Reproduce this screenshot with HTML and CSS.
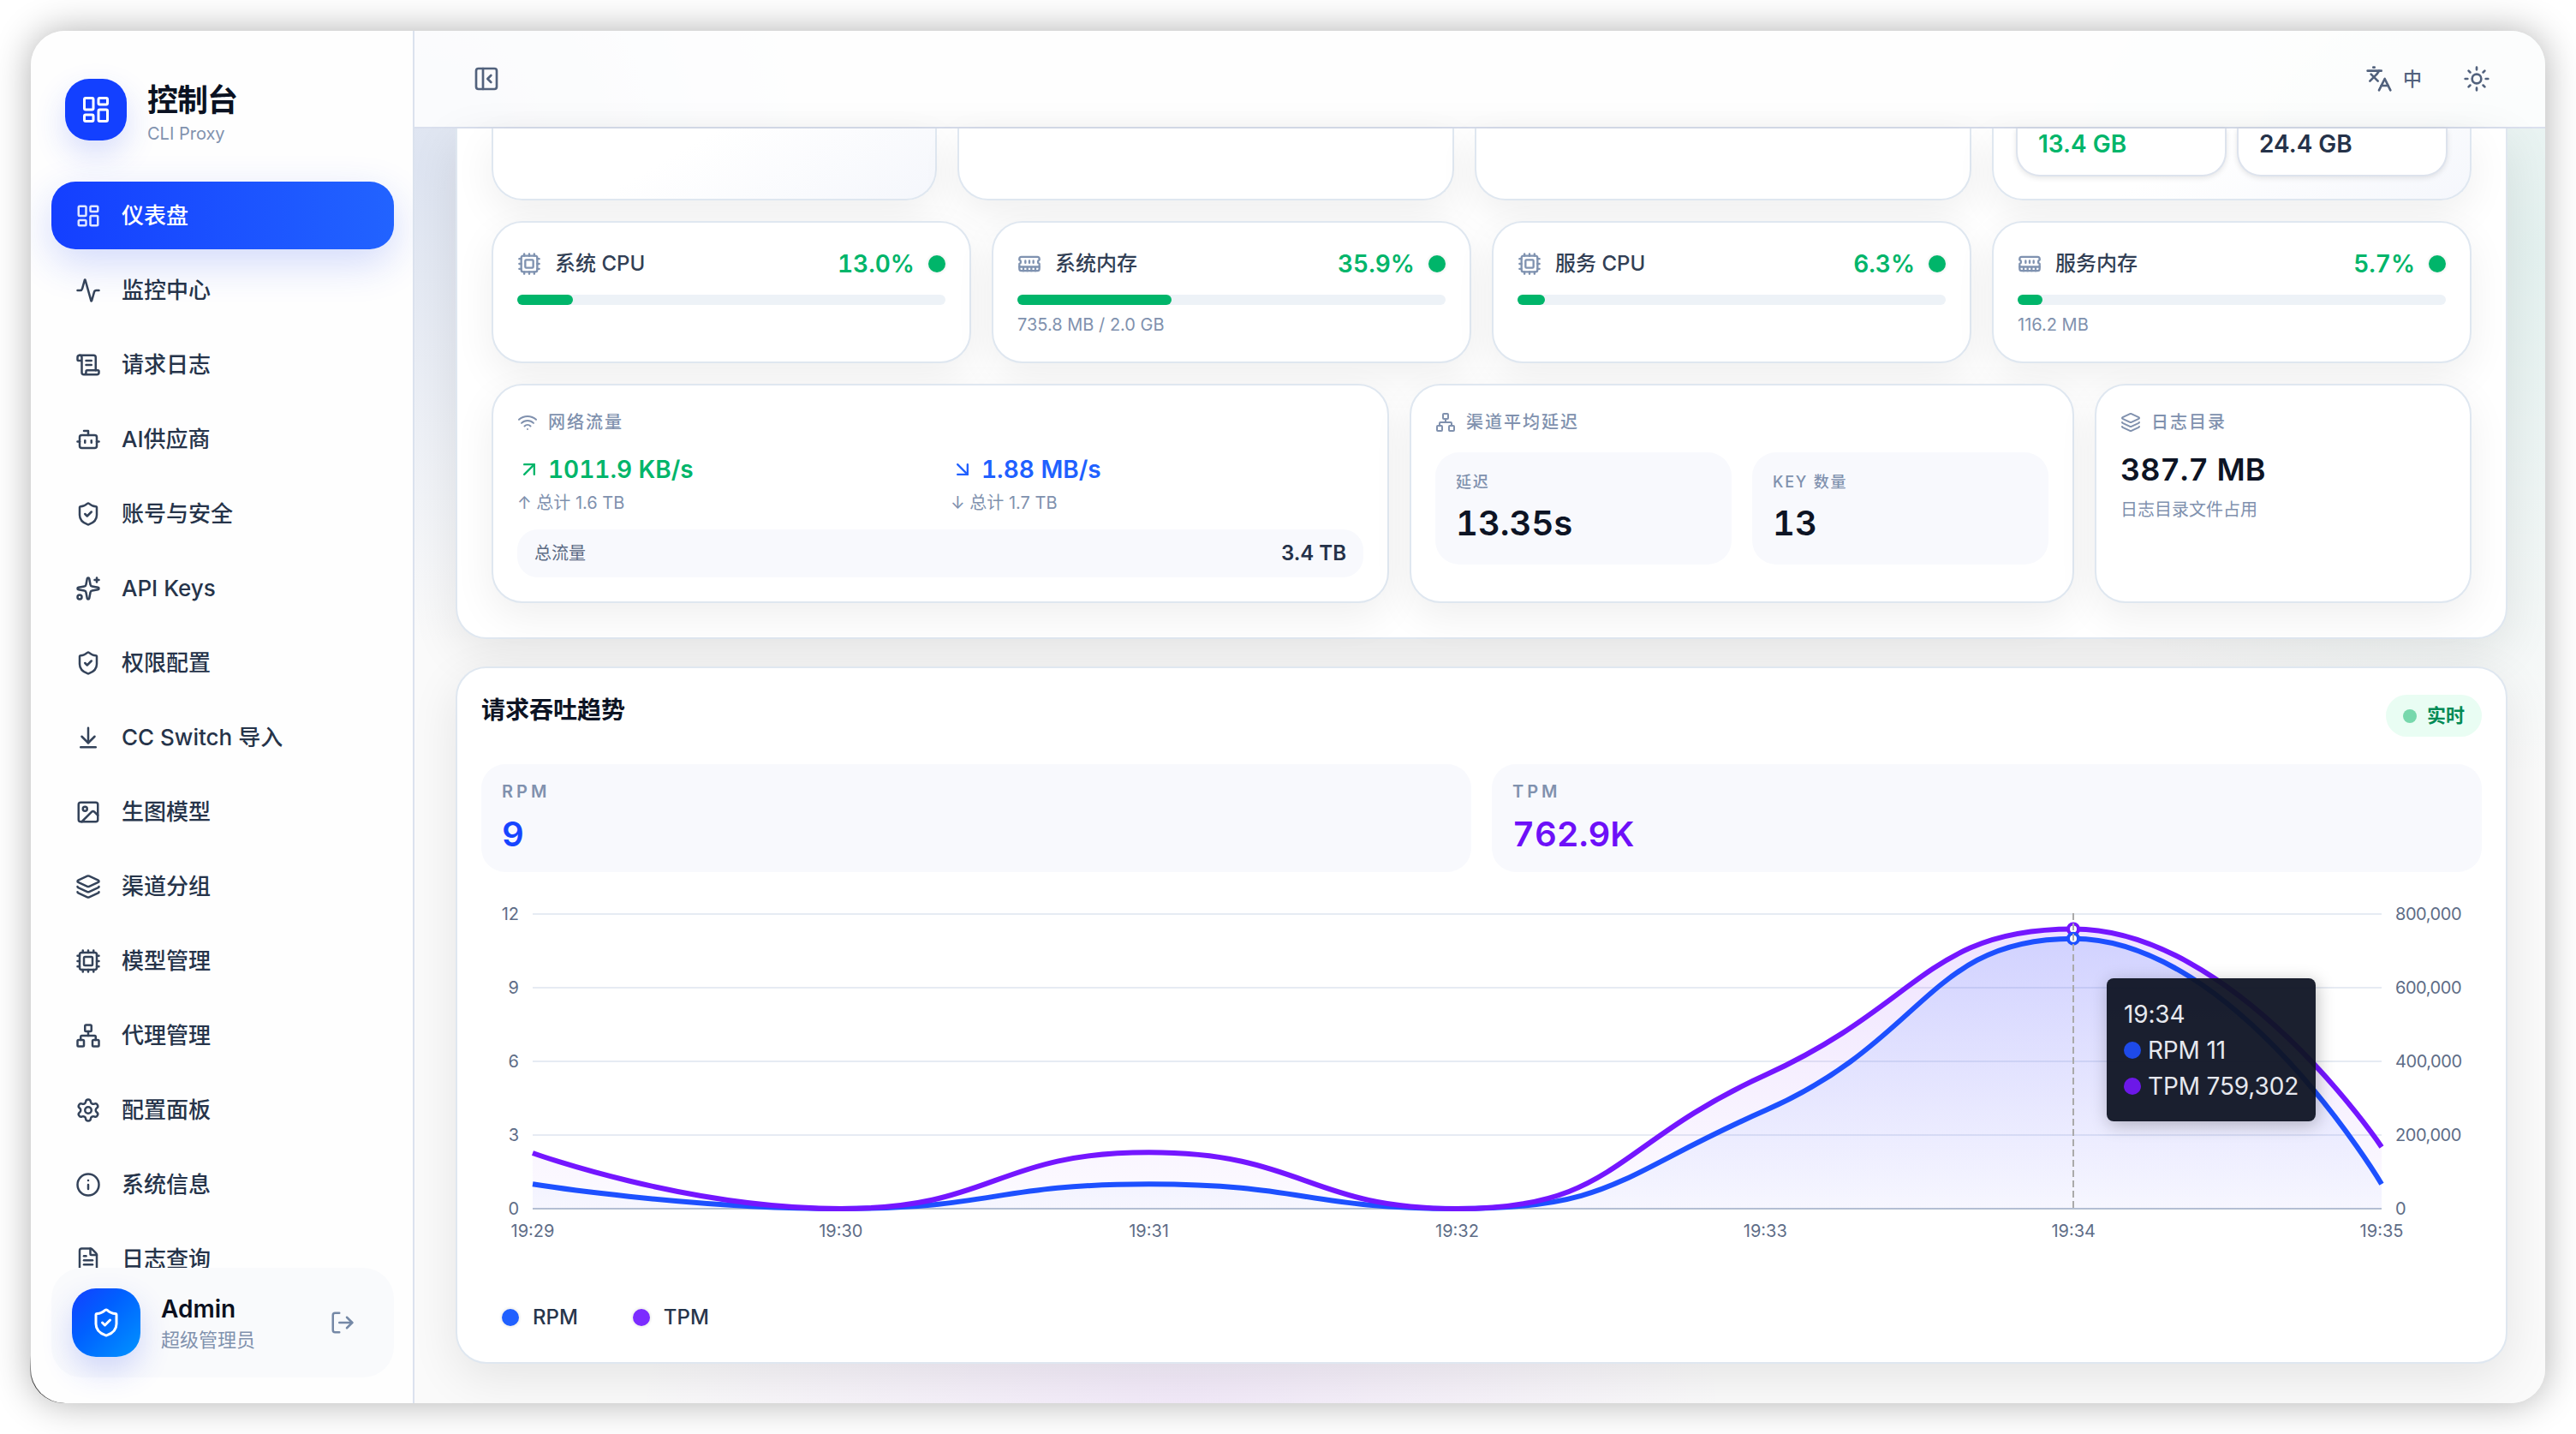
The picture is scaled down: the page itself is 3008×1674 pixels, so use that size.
FILE: index.html
```html
<!DOCTYPE html>
<html lang="zh-CN">
<head>
<meta charset="utf-8">
<title>控制台 · CLI Proxy</title>
<link rel="stylesheet" href="styles.css">
</head>
<body>
<svg class="sprite" aria-hidden="true">
  <symbol id="i-dashboard" viewBox="0 0 24 24"><rect x="3" y="3" width="7" height="9" rx="1"/><rect x="14" y="3" width="7" height="5" rx="1"/><rect x="14" y="12" width="7" height="9" rx="1"/><rect x="3" y="16" width="7" height="5" rx="1"/></symbol>
  <symbol id="i-activity" viewBox="0 0 24 24"><path d="M22 12h-2.48a2 2 0 0 0-1.93 1.46l-2.35 8.36a.25.25 0 0 1-.48 0L9.24 2.18a.25.25 0 0 0-.48 0l-2.35 8.36A2 2 0 0 1 4.49 12H2"/></symbol>
  <symbol id="i-scroll" viewBox="0 0 24 24"><path d="M15 12h-5"/><path d="M15 8h-5"/><path d="M19 17V5a2 2 0 0 0-2-2H4"/><path d="M8 21h12a2 2 0 0 0 2-2v-1a1 1 0 0 0-1-1H11a1 1 0 0 0-1 1v1a2 2 0 1 1-4 0V5a2 2 0 1 0-4 0v2a1 1 0 0 0 1 1h3"/></symbol>
  <symbol id="i-bot" viewBox="0 0 24 24"><path d="M12 8V4H8"/><rect x="4" y="8" width="16" height="12" rx="2"/><path d="M2 14h2"/><path d="M20 14h2"/><path d="M15 13v2"/><path d="M9 13v2"/></symbol>
  <symbol id="i-shield" viewBox="0 0 24 24"><path d="M20 13c0 5-3.5 7.5-7.66 8.95a1 1 0 0 1-.67-.01C7.5 20.5 4 18 4 13V6a1 1 0 0 1 1-1c2 0 4.5-1.2 6.24-2.72a1.17 1.17 0 0 1 1.52 0C14.51 3.81 17 5 19 5a1 1 0 0 1 1 1z"/><path d="m9 12 2 2 4-4"/></symbol>
  <symbol id="i-sparkles" viewBox="0 0 24 24"><path d="M11.017 2.814a1 1 0 0 1 1.966 0l1.051 5.558a2 2 0 0 0 1.594 1.594l5.558 1.051a1 1 0 0 1 0 1.966l-5.558 1.051a2 2 0 0 0-1.594 1.594l-1.051 5.558a1 1 0 0 1-1.966 0l-1.051-5.558a2 2 0 0 0-1.594-1.594l-5.558-1.051a1 1 0 0 1 0-1.966l5.558-1.051a2 2 0 0 0 1.594-1.594z"/><path d="M20 2v4"/><path d="M22 4h-4"/><circle cx="4" cy="20" r="2"/></symbol>
  <symbol id="i-import" viewBox="0 0 24 24"><path d="M12 17V3"/><path d="m6 11 6 6 6-6"/><path d="M19 21H5"/></symbol>
  <symbol id="i-image" viewBox="0 0 24 24"><rect x="3" y="3" width="18" height="18" rx="2"/><circle cx="9" cy="9" r="2"/><path d="m21 15-3.086-3.086a2 2 0 0 0-2.828 0L6 21"/></symbol>
  <symbol id="i-layers" viewBox="0 0 24 24"><path d="M12.83 2.18a2 2 0 0 0-1.66 0L2.6 6.08a1 1 0 0 0 0 1.83l8.58 3.91a2 2 0 0 0 1.66 0l8.58-3.9a1 1 0 0 0 0-1.83z"/><path d="M2 12a1 1 0 0 0 .58.91l8.6 3.91a2 2 0 0 0 1.65 0l8.58-3.9A1 1 0 0 0 22 12"/><path d="M2 17a1 1 0 0 0 .58.91l8.6 3.91a2 2 0 0 0 1.65 0l8.58-3.9A1 1 0 0 0 22 17"/></symbol>
  <symbol id="i-cpu" viewBox="0 0 24 24"><path d="M12 20v2M12 2v2M17 20v2M17 2v2M2 12h2M2 17h2M2 7h2M20 12h2M20 17h2M20 7h2M7 20v2M7 2v2"/><rect x="4" y="4" width="16" height="16" rx="2"/><rect x="8" y="8" width="8" height="8" rx="1"/></symbol>
  <symbol id="i-network" viewBox="0 0 24 24"><rect x="16" y="16" width="6" height="6" rx="1"/><rect x="2" y="16" width="6" height="6" rx="1"/><rect x="9" y="2" width="6" height="6" rx="1"/><path d="M5 16v-3a1 1 0 0 1 1-1h12a1 1 0 0 1 1 1v3"/><path d="M12 12V8"/></symbol>
  <symbol id="i-settings" viewBox="0 0 24 24"><path d="M9.671 4.136a2.34 2.34 0 0 1 4.659 0 2.34 2.34 0 0 0 3.319 1.915 2.34 2.34 0 0 1 2.33 4.033 2.34 2.34 0 0 0 0 3.831 2.34 2.34 0 0 1-2.33 4.033 2.34 2.34 0 0 0-3.319 1.915 2.34 2.34 0 0 1-4.659 0 2.34 2.34 0 0 0-3.32-1.915 2.34 2.34 0 0 1-2.33-4.033 2.34 2.34 0 0 0 0-3.831A2.34 2.34 0 0 1 6.35 6.051a2.34 2.34 0 0 0 3.319-1.915"/><circle cx="12" cy="12" r="3"/></symbol>
  <symbol id="i-info" viewBox="0 0 24 24"><circle cx="12" cy="12" r="10"/><path d="M12 16v-4"/><path d="M12 8h.01"/></symbol>
  <symbol id="i-file" viewBox="0 0 24 24"><path d="M6 22a2 2 0 0 1-2-2V4a2 2 0 0 1 2-2h8a2.4 2.4 0 0 1 1.704.706l3.588 3.588A2.4 2.4 0 0 1 20 8v12a2 2 0 0 1-2 2z"/><path d="M14 2v5a1 1 0 0 0 1 1h5"/><path d="M10 9H8"/><path d="M16 13H8"/><path d="M16 17H8"/></symbol>
  <symbol id="i-logout" viewBox="0 0 24 24"><path d="m16 17 5-5-5-5"/><path d="M21 12H9"/><path d="M9 21H5a2 2 0 0 1-2-2V5a2 2 0 0 1 2-2h4"/></symbol>
  <symbol id="i-panel" viewBox="0 0 24 24"><rect x="3" y="3" width="18" height="18" rx="2"/><path d="M9 3v18"/><path d="m16 15-3-3 3-3"/></symbol>
  <symbol id="i-lang" viewBox="0 0 24 24"><path d="m5 8 6 6"/><path d="m4 14 6-6 2-3"/><path d="M2 5h12"/><path d="M7 2h1"/><path d="m22 22-5-10-5 10"/><path d="M14 18h6"/></symbol>
  <symbol id="i-sun" viewBox="0 0 24 24"><circle cx="12" cy="12" r="4"/><path d="M12 2v2M12 20v2M4.93 4.93l1.41 1.41M17.66 17.66l1.41 1.41M2 12h2M20 12h2M6.34 17.66l-1.41 1.41M19.07 4.93l-1.41 1.41"/></symbol>
  <symbol id="i-memory" viewBox="0 0 24 24"><path d="M6 19v-3M10 19v-3M14 19v-3M18 19v-3M8 11V9M16 11V9M12 11V9M2 15h20"/><path d="M2 7a2 2 0 0 1 2-2h16a2 2 0 0 1 2 2v1.1a2 2 0 0 0 0 3.837V17a2 2 0 0 1-2 2H4a2 2 0 0 1-2-2v-5.1a2 2 0 0 0 0-3.837Z"/></symbol>
  <symbol id="i-wifi" viewBox="0 0 24 24"><path d="M12 20h.01"/><path d="M2 8.82a15 15 0 0 1 20 0"/><path d="M5 12.859a10 10 0 0 1 14 0"/><path d="M8.5 16.429a5 5 0 0 1 7 0"/></symbol>
  <symbol id="i-upright" viewBox="0 0 24 24"><path d="M7 7h10v10"/><path d="M7 17 17 7"/></symbol>
  <symbol id="i-downright" viewBox="0 0 24 24"><path d="m7 7 10 10"/><path d="M17 7v10H7"/></symbol>
</svg>

<div class="window">
  <aside class="sidebar">
    <div class="brand">
      <div class="brand-mark"><svg class="icon icon-36"><use href="#i-dashboard"/></svg></div>
      <div class="brand-text"><div class="brand-title">控制台</div><div class="brand-sub">CLI Proxy</div></div>
    </div>
    <nav class="nav">
      <a class="nav-item active"><svg class="icon icon-30"><use href="#i-dashboard"/></svg><span>仪表盘</span></a>
      <a class="nav-item"><svg class="icon icon-30"><use href="#i-activity"/></svg><span>监控中心</span></a>
      <a class="nav-item"><svg class="icon icon-30"><use href="#i-scroll"/></svg><span>请求日志</span></a>
      <a class="nav-item"><svg class="icon icon-30"><use href="#i-bot"/></svg><span>AI供应商</span></a>
      <a class="nav-item"><svg class="icon icon-30"><use href="#i-shield"/></svg><span>账号与安全</span></a>
      <a class="nav-item"><svg class="icon icon-30"><use href="#i-sparkles"/></svg><span>API Keys</span></a>
      <a class="nav-item"><svg class="icon icon-30"><use href="#i-shield"/></svg><span>权限配置</span></a>
      <a class="nav-item"><svg class="icon icon-30"><use href="#i-import"/></svg><span>CC Switch 导入</span></a>
      <a class="nav-item"><svg class="icon icon-30"><use href="#i-image"/></svg><span>生图模型</span></a>
      <a class="nav-item"><svg class="icon icon-30"><use href="#i-layers"/></svg><span>渠道分组</span></a>
      <a class="nav-item"><svg class="icon icon-30"><use href="#i-cpu"/></svg><span>模型管理</span></a>
      <a class="nav-item"><svg class="icon icon-30"><use href="#i-network"/></svg><span>代理管理</span></a>
      <a class="nav-item"><svg class="icon icon-30"><use href="#i-settings"/></svg><span>配置面板</span></a>
      <a class="nav-item"><svg class="icon icon-30"><use href="#i-info"/></svg><span>系统信息</span></a>
      <a class="nav-item"><svg class="icon icon-30"><use href="#i-file"/></svg><span>日志查询</span></a>
    </nav>
    <div class="user">
      <div class="avatar"><svg class="icon icon-36"><use href="#i-shield"/></svg></div>
      <div class="user-text"><div class="user-name">Admin</div><div class="user-role">超级管理员</div></div>
      <div class="user-logout"><svg class="icon icon-30"><use href="#i-logout"/></svg></div>
    </div>
  </aside>

  <main class="main">
    <header class="topbar">
      <div class="tool"><svg class="icon icon-32"><use href="#i-panel"/></svg></div>
      <div class="topbar-right">
        <div class="lang"><svg class="icon icon-32"><use href="#i-lang"/></svg><span>中</span></div>
        <div class="tool"><svg class="icon icon-32"><use href="#i-sun"/></svg></div>
      </div>
    </header>

    <div class="content">
      <section class="panel overview">
        <div class="row row-summary">
          <div class="card cut tinted"></div>
          <div class="card cut"></div>
          <div class="card cut"></div>
          <div class="card cut tinted pair">
            <div class="mini green">13.4 GB</div>
            <div class="mini">24.4 GB</div>
          </div>
        </div>

        <div class="row row-meters">
          <div class="card meter">
            <div class="meter-head"><svg class="icon icon-28"><use href="#i-cpu"/></svg><span class="meter-name">系统 CPU</span><span class="meter-value">13.0%</span><i class="dot"></i></div>
            <div class="bar"><div class="bar-fill" style="width:13%"></div></div>
          </div>
          <div class="card meter">
            <div class="meter-head"><svg class="icon icon-28"><use href="#i-memory"/></svg><span class="meter-name">系统内存</span><span class="meter-value">35.9%</span><i class="dot"></i></div>
            <div class="bar"><div class="bar-fill" style="width:35.9%"></div></div>
            <div class="meter-sub">735.8 MB / 2.0 GB</div>
          </div>
          <div class="card meter">
            <div class="meter-head"><svg class="icon icon-28"><use href="#i-cpu"/></svg><span class="meter-name">服务 CPU</span><span class="meter-value">6.3%</span><i class="dot"></i></div>
            <div class="bar"><div class="bar-fill" style="width:6.3%"></div></div>
          </div>
          <div class="card meter">
            <div class="meter-head"><svg class="icon icon-28"><use href="#i-memory"/></svg><span class="meter-name">服务内存</span><span class="meter-value">5.7%</span><i class="dot"></i></div>
            <div class="bar"><div class="bar-fill" style="width:5.7%"></div></div>
            <div class="meter-sub">116.2 MB</div>
          </div>
        </div>

        <div class="row row-detail">
          <div class="card detail">
            <div class="detail-head"><svg class="icon icon-24"><use href="#i-wifi"/></svg><span>网络流量</span></div>
            <div class="traffic">
              <div>
                <div class="speed up"><svg class="icon icon-28"><use href="#i-upright"/></svg><span>1011.9 KB/s</span></div>
                <div class="speed-sub">↑ 总计 1.6 TB</div>
              </div>
              <div>
                <div class="speed down"><svg class="icon icon-28"><use href="#i-downright"/></svg><span>1.88 MB/s</span></div>
                <div class="speed-sub">↓ 总计 1.7 TB</div>
              </div>
            </div>
            <div class="total"><span>总流量</span><b>3.4 TB</b></div>
          </div>
          <div class="card detail">
            <div class="detail-head"><svg class="icon icon-24"><use href="#i-network"/></svg><span>渠道平均延迟</span></div>
            <div class="latency">
              <div class="tile"><div class="tile-label">延迟</div><div class="tile-value">13.35s</div></div>
              <div class="tile"><div class="tile-label">KEY 数量</div><div class="tile-value">13</div></div>
            </div>
          </div>
          <div class="card detail">
            <div class="detail-head"><svg class="icon icon-24"><use href="#i-layers"/></svg><span>日志目录</span></div>
            <div class="disk">387.7 MB</div>
            <div class="disk-sub">日志目录文件占用</div>
          </div>
        </div>
      </section>

      <section class="panel trend">
        <div class="trend-head"><h2>请求吞吐趋势</h2><div class="live"><i></i><span>实时</span></div></div>
        <div class="stats">
          <div class="stat"><div class="stat-label">RPM</div><div class="stat-value rpm">9</div></div>
          <div class="stat"><div class="stat-label">TPM</div><div class="stat-value tpm">762.9K</div></div>
        </div>
        <div class="chart">
          <svg class="plot" viewBox="562 1042 2336 454">
            <defs>
              <linearGradient id="g-rpm" gradientUnits="userSpaceOnUse" x1="0" y1="1095" x2="0" y2="1411"><stop offset="0" stop-color="#3473ff" stop-opacity=".16"/><stop offset="1" stop-color="#3473ff" stop-opacity=".03"/></linearGradient>
              <linearGradient id="g-tpm" gradientUnits="userSpaceOnUse" x1="0" y1="1084" x2="0" y2="1411"><stop offset="0" stop-color="#7a1aff" stop-opacity=".12"/><stop offset="1" stop-color="#7a1aff" stop-opacity=".02"/></linearGradient>
            </defs>
            <path class="grid" d="M622 1067H2781M622 1153H2781M622 1239H2781M622 1325H2781"/>
            <path class="axis" d="M622 1411H2781"/>
            <path fill="url(#g-tpm)" d="M622 1346C622 1346 801.9 1411 981.8 1411C1161.7 1411 1161.7 1345.3 1341.6 1345.3C1521.5 1345.3 1527.9 1411 1701.5 1411C1887.7 1411 1882.7 1336 2061.3 1255C2242.6 1172.8 2250.4 1084.5 2421.2 1084.5C2610.2 1084.5 2781 1339 2781 1339V1411H622Z"/>
            <path fill="url(#g-rpm)" d="M622 1382.3C622 1382.3 801.9 1411 981.8 1411C1161.7 1411 1161.7 1382.3 1341.6 1382.3C1521.5 1382.3 1525.7 1411 1701.5 1411C1885.4 1411 1889.2 1371.7 2061.3 1296.3C2249 1214.1 2251.2 1095.7 2421.2 1095.7C2611 1095.7 2781 1382.3 2781 1382.3V1411H622Z"/>
            <path class="line line-rpm" d="M622 1382.3C622 1382.3 801.9 1411 981.8 1411C1161.7 1411 1161.7 1382.3 1341.6 1382.3C1521.5 1382.3 1525.7 1411 1701.5 1411C1885.4 1411 1889.2 1371.7 2061.3 1296.3C2249 1214.1 2251.2 1095.7 2421.2 1095.7C2611 1095.7 2781 1382.3 2781 1382.3"/>
            <path class="line line-tpm" d="M622 1346C622 1346 801.9 1411 981.8 1411C1161.7 1411 1161.7 1345.3 1341.6 1345.3C1521.5 1345.3 1527.9 1411 1701.5 1411C1887.7 1411 1882.7 1336 2061.3 1255C2242.6 1172.8 2250.4 1084.5 2421.2 1084.5C2610.2 1084.5 2781 1339 2781 1339"/>
            <circle class="mark line-tpm" cx="2421" cy="1084.5" r="6"/>
            <circle class="mark line-rpm" cx="2421" cy="1095.7" r="6"/>
            <path class="pointer" d="M2421 1066V1411"/>
            <g class="tick" text-anchor="end"><text x="606" y="1073.5">12</text><text x="606" y="1159.5">9</text><text x="606" y="1245.5">6</text><text x="606" y="1331.5">3</text><text x="606" y="1417.5">0</text></g>
            <g class="tick tick-right"><text x="2797" y="1073.5">800,000</text><text x="2797" y="1159.5">600,000</text><text x="2797" y="1245.5">400,000</text><text x="2797" y="1331.5">200,000</text><text x="2797" y="1417.5">0</text></g>
            <g class="tick" text-anchor="middle"><text x="622" y="1443.5">19:29</text><text x="981.8" y="1443.5">19:30</text><text x="1341.6" y="1443.5">19:31</text><text x="1701.5" y="1443.5">19:32</text><text x="2061.3" y="1443.5">19:33</text><text x="2421.2" y="1443.5">19:34</text><text x="2781" y="1443.5">19:35</text></g>
          </svg>
          <div class="tooltip">
            <div>19:34</div>
            <div><i class="bg-rpm"></i>RPM 11</div>
            <div><i class="bg-tpm"></i>TPM 759,302</div>
          </div>
        </div>
        <div class="legend"><span><i class="key-rpm"></i>RPM</span><span><i class="key-tpm"></i>TPM</span></div>
      </section>
    </div>
  </main>
</div>
</body>
</html>
```
FILE: styles.css
```css
* { box-sizing: border-box; }

body {
  margin: 0;
  width: 3008px;
  height: 1674px;
  padding: 36px;
  overflow: hidden;
  background: #fff;
  color: #27354b;
  font-family: Inter, "Noto Sans CJK SC", sans-serif;
  font-size: 24px;
  line-height: 1.5;
}

.sprite { display: none; }

.icon {
  flex: none;
  fill: none;
  stroke: currentColor;
  stroke-width: 2;
  stroke-linecap: round;
  stroke-linejoin: round;
}
.icon-24 { width: 24px; height: 24px; }
.icon-28 { width: 28px; height: 28px; }
.icon-30 { width: 30px; height: 30px; }
.icon-32 { width: 32px; height: 32px; }
.icon-36 { width: 36px; height: 36px; }

.window {
  position: relative;
  display: flex;
  width: 2936px;
  height: 1602px;
  border-radius: 40px;
  box-shadow: 0 0 44px rgba(0, 0, 0, .31);
}
/* dark sliver hugging the lower-left corner */
.window::before {
  content: "";
  position: absolute;
  z-index: -1;
  left: -1px;
  bottom: 0;
  width: 50px;
  height: 56px;
  border-radius: 0 0 0 40px;
  background: linear-gradient(#0000, #333 60%);
}

/* sidebar */
.sidebar {
  display: flex;
  flex-direction: column;
  width: 448px;
  padding-bottom: 30px;
  border-right: 2px solid #dbe2ee;
  border-radius: 40px 0 0 40px;
  background: #fefefe;
}
.brand {
  display: flex;
  flex: none;
  align-items: flex-start;
  gap: 24px;
  height: 128px;
  padding: 56px 40px 0;
}
.brand-mark {
  display: grid;
  place-items: center;
  width: 72px;
  height: 72px;
  border-radius: 28px;
  background: #1340ff;
  color: #fff;
  box-shadow: 0 16px 36px rgba(40, 70, 240, .18);
}
.brand-title {
  margin-top: 2px;
  color: #0b1222;
  font-size: 36px;
  font-weight: 700;
  line-height: 46px;
  letter-spacing: -1px;
}
.brand-sub {
  margin-top: 3px;
  color: #8192ae;
  font-size: 20px;
  line-height: 26px;
}
.nav {
  display: flex;
  flex: 1;
  flex-direction: column;
  gap: 8px;
  min-height: 0;
  padding: 48px 22px 0 24px;
  overflow: hidden;
}
.nav-item {
  display: flex;
  flex: none;
  align-items: center;
  gap: 24px;
  height: 79px;
  width: 400px;
  padding: 0 28px;
  border-radius: 28px;
  color: #26344a;
  font-size: 26px;
  font-weight: 500;
}
.nav-item .icon { color: #34435a; }
.nav-item.active {
  background: linear-gradient(90deg, #143fff, #2263ff);
  color: #fff;
  box-shadow: 0 16px 48px rgba(30, 70, 240, .2);
}
.nav-item.active .icon { color: #dfe5ff; }
.user {
  display: flex;
  align-items: center;
  width: 400px;
  height: 128px;
  margin-left: 24px;
  padding: 24px;
  border-radius: 36px;
  background: #f9fafc;
}
.avatar {
  display: grid;
  place-items: center;
  width: 80px;
  height: 80px;
  border-radius: 28px;
  background: linear-gradient(135deg, #143fff, #0060ff 40%, #0094ff);
  color: #fff;
  box-shadow: 0 16px 36px rgba(40, 70, 240, .2);
}
.user-text { flex: 1; padding: 2px 0 0 24px; }
.user-name { color: #0b1020; font-size: 28px; font-weight: 600; line-height: 38px; }
.user-role { color: #8192ae; font-size: 22px; line-height: 34px; }
.user-logout { display: grid; place-items: center; width: 72px; color: #7588a6; }

/* main column */
.main {
  display: flex;
  flex: 1;
  flex-direction: column;
  min-width: 0;
  border-radius: 0 40px 40px 0;
  overflow: hidden;
  background:
    radial-gradient(520px 560px at 0% 10%, rgba(30, 80, 180, .13), transparent),
    radial-gradient(700px 620px at 100% 16%, rgba(0, 150, 130, .09), transparent),
    radial-gradient(640px 300px at 36% 100%, rgba(150, 40, 240, .08), transparent),
    #fafafa;
}
.topbar {
  display: flex;
  flex: none;
  align-items: center;
  justify-content: space-between;
  height: 114px;
  padding: 0 44px 0 48px;
  border-bottom: 2px solid #dae0ee;
  background: rgba(255, 255, 255, .82);
  color: #52627d;
}
.topbar-right, .lang { display: flex; align-items: center; }
.lang { gap: 12px; margin-right: 28px; font-size: 22px; font-weight: 500; }
.tool { display: grid; place-items: center; width: 72px; height: 72px; }

.content {
  flex: 1;
  min-height: 0;
  padding: 0 44px 0 48px;
}
.panel {
  border: 2px solid #dfe7f0;
  background: #fff;
  box-shadow: 0 16px 56px rgba(0, 0, 0, .09);
}
.overview {
  display: flex;
  flex-direction: column;
  gap: 24px;
  padding: 0 40px 40px;
  border-top: 0;
  border-radius: 0 0 36px 36px;
}
.row { display: grid; gap: 24px; }
.row-summary { grid-template-columns: 520px 580px 580px 560px; height: 84px; }
.row-meters { grid-template-columns: repeat(4, 1fr); height: 166px; }
.row-detail { grid-template-columns: 1048px 776px 440px; height: 256px; }

.card {
  border: 2px solid #dfe7f0;
  border-radius: 36px;
  background: #fff;
  box-shadow: 0 16px 48px rgba(0, 0, 0, .065);
}
.cut { border-top: 0; border-radius: 0 0 36px 36px; }
.tinted { background: linear-gradient(150deg, #fff 40%, #f5f7fc); }
.pair { display: grid; grid-template-columns: 1fr 1fr; gap: 12px; padding: 0 26px 26px; }
.mini {
  border: 2px solid #dde3ed;
  border-top: 0;
  border-radius: 0 0 28px 28px;
  padding: 0 24px;
  background: #fff;
  box-shadow: 0 2px 6px rgba(0, 0, 0, .1);
  color: #253249;
  font-size: 28px;
  font-weight: 600;
  line-height: 37px;
}
.mini.green { color: #00b56a; }

.meter { padding: 28px; }
.meter-head { display: flex; align-items: center; height: 40px; color: #7f92b0; }
.meter-name { flex: 1; margin-left: 16px; color: #323f55; font-weight: 500; }
.meter-value {
  color: #00b56a;
  font-size: 28px;
  font-weight: 600;
  font-variant-numeric: tabular-nums;
}
.dot {
  width: 20px;
  height: 20px;
  margin-left: 16px;
  border-radius: 50%;
  background: #00b56a;
  box-shadow: 0 0 2px 2px rgba(0, 0, 0, .04);
}
.bar { height: 12px; margin-top: 16px; border-radius: 6px; background: #edf2f7; }
.bar-fill { height: 12px; border-radius: 6px; background: #00b56a; }
.meter-sub { margin-top: 8px; color: #8091ae; font-size: 20px; line-height: 30px; }

.detail { padding: 28px; }
.detail-head {
  display: flex;
  align-items: center;
  gap: 12px;
  height: 30px;
  color: #8091ae;
  font-size: 20px;
  font-weight: 500;
  letter-spacing: 2px;
}
.traffic { display: grid; grid-template-columns: 1fr 1fr; gap: 24px; margin-top: 20px; }
.speed {
  display: flex;
  align-items: center;
  gap: 8px;
  height: 40px;
  font-size: 28px;
  font-weight: 600;
  font-variant-numeric: tabular-nums;
}
.speed.up { color: #00b56a; }
.speed.down { color: #2060ff; }
.speed-sub { margin-top: 4px; color: #8091ae; font-size: 20px; line-height: 30px; }
.total {
  display: flex;
  align-items: center;
  justify-content: space-between;
  height: 56px;
  margin-top: 16px;
  padding: 0 20px;
  border-radius: 24px;
  background: #f8f9fd;
  color: #5c6b84;
  font-size: 20px;
}
.total b { color: #253249; font-size: 24px; font-weight: 600; }
.latency { display: grid; grid-template-columns: 1fr 1fr; gap: 24px; margin-top: 20px; }
.tile { height: 131px; padding: 21px 24px 0; border-radius: 28px; background: #f8f9fd; }
.tile-label { color: #8091ae; font-size: 18px; font-weight: 500; line-height: 27px; letter-spacing: 1.8px; }
.tile-value {
  margin-top: 5px;
  color: #0d1424;
  font-size: 40px;
  font-weight: 600;
  line-height: 60px;
  font-variant-numeric: tabular-nums;
}
.disk {
  margin-top: 16px;
  color: #0d1424;
  font-size: 36px;
  font-weight: 600;
  line-height: 48px;
  font-variant-numeric: tabular-nums;
}
.disk-sub { margin-top: 8px; color: #8091ae; font-size: 20px; line-height: 30px; }

/* throughput trend */
.trend { height: 814px; margin-top: 32px; padding: 28px; border-radius: 36px; }
.trend-head { display: flex; justify-content: space-between; height: 84px; }
.trend-head h2 { margin: 1px 0 0; color: #0d1424; font-size: 28px; font-weight: 700; line-height: 40px; }
.live {
  display: flex;
  align-items: center;
  gap: 12px;
  height: 49px;
  margin-top: 3px;
  padding: 0 20px;
  border-radius: 25px;
  background: #e9fdf3;
  color: #008a55;
  font-size: 22px;
  font-weight: 600;
}
.live i { width: 16px; height: 16px; border-radius: 50%; background: #77d8ac; }
.stats { display: grid; grid-template-columns: 1fr 1fr; gap: 24px; }
.stat { height: 126px; padding: 17px 24px 0; border-radius: 28px; background: #f8f9fd; }
.stat-label { color: #8091ae; font-size: 20px; font-weight: 600; line-height: 30px; letter-spacing: 4px; }
.stat-value {
  margin-top: 5px;
  font-size: 40px;
  font-weight: 600;
  line-height: 60px;
  font-variant-numeric: tabular-nums;
}
.stat-value.rpm { color: #1745ff; }
.stat-value.tpm { color: #6d10f8; }

.chart { position: relative; height: 454px; margin-top: 24px; }
.plot { display: block; width: 2336px; height: 454px; }
.grid { stroke: #e6ebf3; stroke-width: 2; }
.axis { stroke: #b6c2d2; stroke-width: 2; }
.line { fill: none; stroke-width: 6; stroke-linejoin: bevel; }
.line-rpm { stroke: #1d50ff; }
.line-tpm { stroke: #7416ff; }
.mark { fill: #fff; stroke-width: 4; }
.pointer { stroke: #aaa; stroke-width: 2; stroke-dasharray: 8 4; }
.tick { fill: #5e6d87; font-size: 20px; }
.tick-right { letter-spacing: -.45px; }

.tooltip {
  position: absolute;
  left: 1898px;
  top: 100px;
  width: 244px;
  height: 167px;
  padding: 21px 20px;
  border-radius: 8px;
  background: rgba(15, 20, 36, .95);
  box-shadow: 2px 4px 20px rgba(0, 0, 0, .25);
  color: #e6e8ee;
  font-size: 28px;
  line-height: 42px;
  letter-spacing: -.15px;
  white-space: nowrap;
}
.tooltip i {
  display: inline-block;
  width: 20px;
  height: 20px;
  margin-right: 8px;
  border-radius: 50%;
}
.bg-rpm { background: #1e4ae8; }
.bg-tpm { background: #6c18e8; }

.legend {
  display: flex;
  gap: 64px;
  margin-top: 22px;
  padding-left: 24px;
  font-weight: 500;
  line-height: 40px;
}
.legend span { display: flex; align-items: center; gap: 16px; }
.legend i { width: 20px; height: 20px; border-radius: 50%; box-shadow: 0 0 2px 2px rgba(0, 0, 0, .05); }
.key-rpm { background: #2060ff; }
.key-tpm { background: #7c2cff; }
```
